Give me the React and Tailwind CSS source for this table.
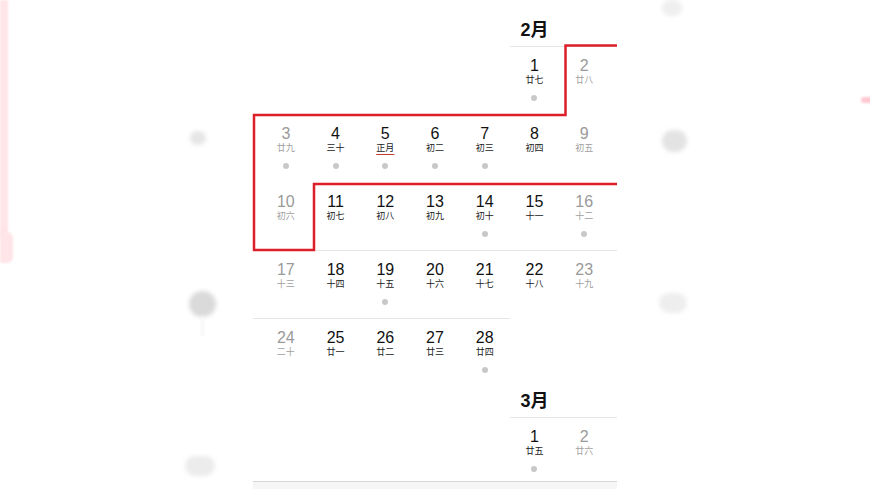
import React from "react";

const FONT = { fontFamily: '"Liberation Sans", "Noto Sans CJK SC", Arial, sans-serif' };

const feb = {
  title: "2月",
  start: 5,
  days: [
    "廿七","廿八","廿九","三十","正月","初二","初三","初四","初五","初六",
    "初七","初八","初九","初十","十一","十二","十三","十四","十五","十六",
    "十七","十八","十九","二十","廿一","廿二","廿三","廿四",
  ],
  dots: [1, 3, 4, 5, 6, 7, 14, 16, 19, 28],
  hiddenLines: [1, 2],
};

const mar = {
  title: "3月",
  start: 5,
  days: ["廿五", "廿六"],
  dots: [1],
  hiddenLines: [],
};

function weeksOf(month) {
  const cells = [];
  for (let i = 0; i < month.start; i++) cells.push(null);
  month.days.forEach((l, i) => cells.push({ d: i + 1, lunar: l }));
  const weeks = [];
  for (let i = 0; i < cells.length; i += 7) {
    const w = cells.slice(i, i + 7);
    while (w.length < 7) w.push(null);
    weeks.push(w);
  }
  return weeks;
}

function Cell({ c, col, dots }) {
  if (!c) return <div className="h-full" />;
  const weekend = col === 0 || col === 6;
  const numColor = weekend ? "text-[#9a9a9a]" : "text-[#111111]";
  const lunColor = weekend ? "text-[#a0a0a0]" : "text-[#1a1a1a]";
  const special = c.lunar === "正月";
  return (
    <div className="flex flex-col items-center pt-[9px]">
      <div className={`text-[16px] leading-[19px] ${numColor}`}>{c.d}</div>
      <div
        className={`text-[9px] leading-[11px] ${lunColor} ${
          special ? "underline decoration-[#c0392b] decoration-1 underline-offset-[3px]" : ""
        }`}
      >
        {c.lunar}
      </div>
      {dots.includes(c.d) ? (
        <div className="mt-[9px] h-[6px] w-[6px] rounded-full bg-[#c8c8c8]" />
      ) : null}
    </div>
  );
}

function Week({ week, dots, last, noLine }) {
  const has = week.map((c) => !noLine && !!c);
  return (
    <div className={`flex flex-col ${last ? "h-[64px]" : "h-[68px]"}`}>
      <div className="flex h-px">
        <div className={`w-[8px] ${has[0] ? "bg-[#e6e6e6]" : ""}`} />
        {has.map((h, i) => (
          <div key={i} className={`flex-1 ${h ? "bg-[#e6e6e6]" : ""}`} />
        ))}
        <div className={`w-[8px] ${has[6] ? "bg-[#e6e6e6]" : ""}`} />
      </div>
      <div className="grid flex-1 grid-cols-7 px-2">
        {week.map((c, i) => (
          <Cell key={i} c={c} col={i} dots={dots} />
        ))}
      </div>
    </div>
  );
}

function Month({ month, lastMonth }) {
  const weeks = weeksOf(month);
  return (
    <div className="flex flex-col">
      <div className="grid h-[31px] grid-cols-7 px-2">
        {Array.from({ length: 7 }).map((_, i) => (
          <div
            key={i}
            className="flex items-center justify-center text-[18px] font-bold leading-[31px] text-[#111111]"
          >
            {i === month.start ? month.title : ""}
          </div>
        ))}
      </div>
      {weeks.map((w, i) => (
        <Week
          key={i}
          week={w}
          dots={month.dots}
          noLine={month.hiddenLines.includes(i)}
          last={lastMonth && i === weeks.length - 1}
        />
      ))}
    </div>
  );
}

export default function App() {
  return (
    <div className="relative h-[489px] w-[870px] overflow-hidden bg-white" style={FONT}>
      {/* blurred background bits */}
      <div className="absolute left-0 top-0 h-[236px] w-[8px] bg-[#ffe4e8] blur-[1px]" />
      <div className="absolute left-0 top-[232px] h-[31px] w-[13px] rounded-r-[6px] bg-[#ffe4e8] blur-[1px]" />
      <div className="absolute left-[861px] top-[97px] h-[6px] w-[12px] rounded-full bg-[#ffc8d2] blur-[1px]" />
      <div className="absolute left-[190px] top-[131px] h-[14px] w-[16px] rounded-full bg-[#e6e6e6] blur-[2px]" />
      <div className="absolute left-[189px] top-[291px] h-[26px] w-[27px] rounded-full bg-[#dadada] blur-[2px]" />
      <div className="absolute left-[201px] top-[316px] h-[20px] w-[3px] rounded-full bg-[#f6f6f6] blur-[1px]" />
      <div className="absolute left-[185px] top-[456px] h-[20px] w-[30px] rounded-full bg-[#ececec] blur-[2px]" />
      <div className="absolute left-[662px] top-[0px] h-[16px] w-[20px] rounded-full bg-[#efefef] blur-[2px]" />
      <div className="absolute left-[662px] top-[130px] h-[22px] w-[25px] rounded-full bg-[#e3e3e3] blur-[2px]" />
      <div className="absolute left-[659px] top-[293px] h-[20px] w-[28px] rounded-full bg-[#eeeeee] blur-[2px]" />

      <div className="relative ml-[253px] w-[364px] bg-white pt-[15px]">
        <Month month={feb} />
        <Month month={mar} lastMonth />
        <div className="h-px bg-[#d6d6d6]" />
        <div className="h-[20px] bg-[#f6f6f6]" />
      </div>

      <svg
        className="pointer-events-none absolute left-0 top-0"
        width="870"
        height="489"
        viewBox="0 0 870 489"
      >
        <path
          d="M617 45.5 H565.5 V115 H254 V250 H314 V184 H617"
          fill="none"
          stroke="#dc1f29"
          strokeWidth="2.5"
        />
      </svg>
    </div>
  );
}
